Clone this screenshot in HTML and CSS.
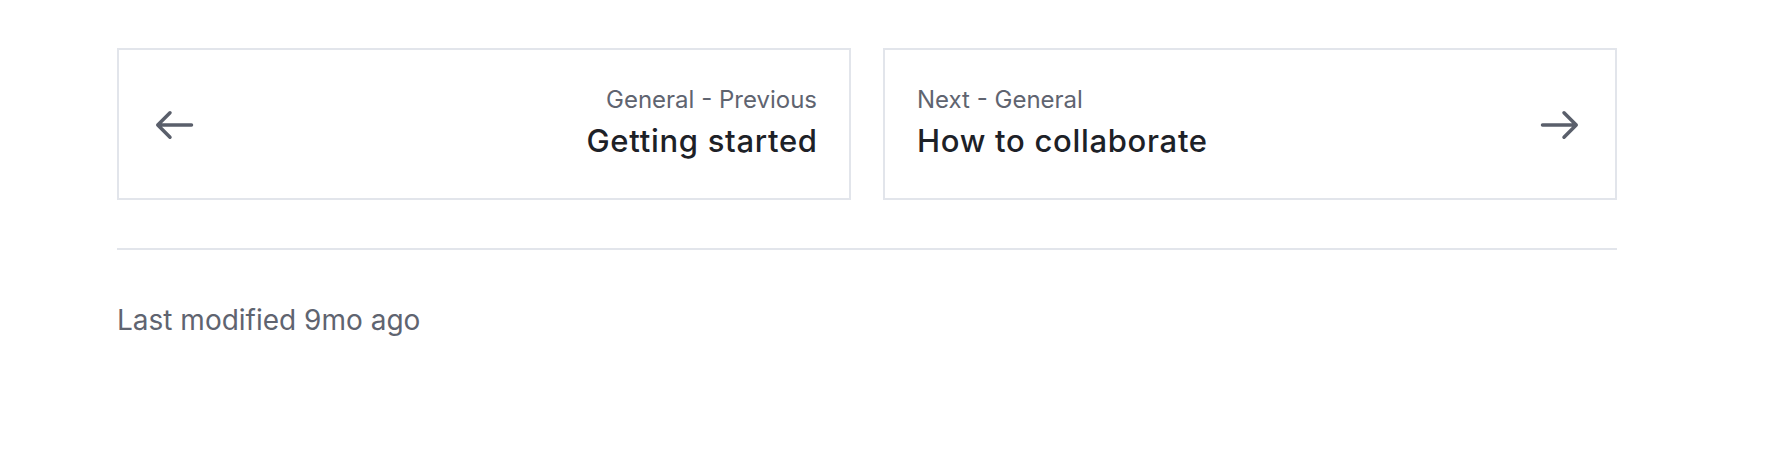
FILE: index.html
```html
<!DOCTYPE html>
<html lang="en">
<head>
<meta charset="utf-8">
<title>Page navigation</title>
<link rel="stylesheet" href="styles.css">
</head>
<body>
<div class="page">
  <nav class="pager">
    <a class="card card-prev" href="#">
      <svg class="arrow" width="44" height="32" viewBox="0 0 44 32" aria-hidden="true">
        <path d="M40.5 16H6.75M19 3.75L6.75 16L19 28.25" fill="none" stroke="currentColor" stroke-width="3.5" stroke-linecap="round" stroke-linejoin="round"/>
      </svg>
      <div class="text text-right">
        <div class="sub">General - Previous</div>
        <div class="title">Getting started</div>
      </div>
    </a>
    <a class="card card-next" href="#">
      <div class="text">
        <div class="sub">Next - General</div>
        <div class="title">How to collaborate</div>
      </div>
      <svg class="arrow" width="44" height="32" viewBox="0 0 44 32" aria-hidden="true">
        <path d="M3.5 16H37.25M25 3.75L37.25 16L25 28.25" fill="none" stroke="currentColor" stroke-width="3.5" stroke-linecap="round" stroke-linejoin="round"/>
      </svg>
    </a>
  </nav>
  <hr class="divider">
  <p class="modified">Last modified 9mo ago</p>
</div>
</body>
</html>
```

FILE: styles.css
```css
html, body {
  margin: 0;
  padding: 0;
  background: #ffffff;
}

body {
  font-family: Inter, "Noto Sans", "Liberation Sans", sans-serif;
}

.page {
  width: 1500px;
  margin-left: 117px;
  padding-top: 48px;
}

.pager {
  display: grid;
  grid-template-columns: 1fr 1fr;
  gap: 32px;
}

.card {
  display: flex;
  align-items: center;
  justify-content: space-between;
  box-sizing: border-box;
  height: 152px;
  padding: 34px 32px 37px;
  border: 2px solid #e2e5eb;
  text-decoration: none;
  color: inherit;
}

.arrow {
  flex: none;
  color: #5a5f6b;
  margin-top: 4px;
}

.text {
  display: flex;
  flex-direction: column;
}

.text-right {
  text-align: right;
}

.sub {
  font-size: 24px;
  line-height: 32px;
  color: #5f6470;
}

.title {
  margin-top: 5px;
  font-size: 31px;
  line-height: 40px;
  font-weight: 500;
  letter-spacing: 0.7px;
  color: #1d2127;
}

.text-right .title {
  margin-right: -0.7px;
}

.divider {
  margin: 48px 0 0;
  border: 0;
  height: 2px;
  background: #e2e5eb;
}

.modified {
  margin: 50px 0 0;
  font-size: 28px;
  line-height: 40px;
  color: #5f6470;
}
```
